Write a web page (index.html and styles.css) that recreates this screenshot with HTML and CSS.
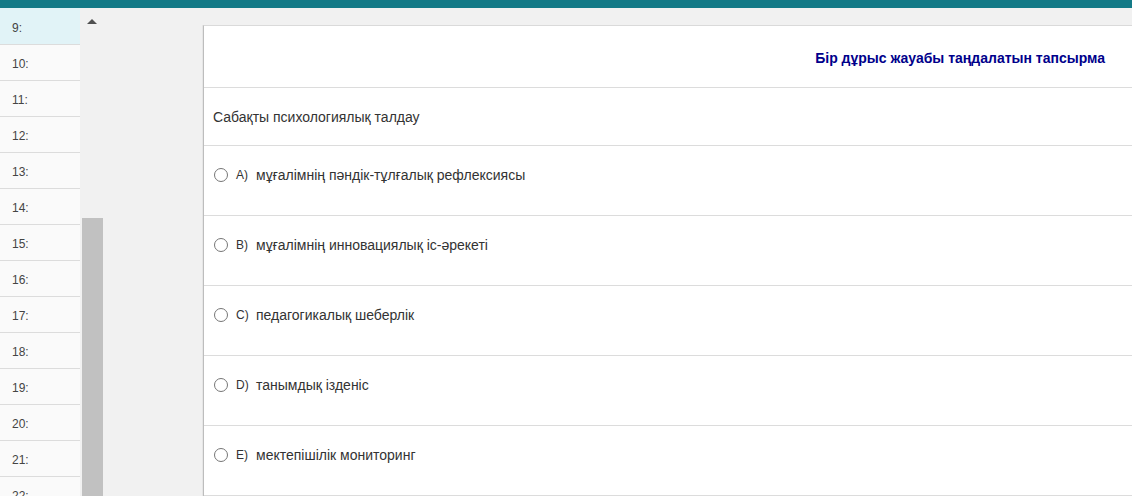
FILE: index.html
```html
<!DOCTYPE html>
<html lang="kk">
<head>
<meta charset="utf-8">
<title>Тест</title>
<link rel="stylesheet" href="styles.css">
</head>
<body>
<div class="topbar"></div>
<div class="main">
  <ul class="nums">
    <li class="active">9:</li>
    <li>10:</li>
    <li>11:</li>
    <li>12:</li>
    <li>13:</li>
    <li>14:</li>
    <li>15:</li>
    <li>16:</li>
    <li>17:</li>
    <li>18:</li>
    <li>19:</li>
    <li>20:</li>
    <li>21:</li>
    <li>22:</li>
  </ul>
  <div class="gutter">
    <div class="scroll">
      <div class="arrow"></div>
      <div class="thumb"></div>
    </div>
  </div>
  <div class="panel">
    <div class="head">Бір дұрыс жауабы таңдалатын тапсырма</div>
    <div class="question">Сабақты психологиялық талдау</div>
    <label class="opt"><span class="radio"></span><span class="letter">A)</span><span class="txt">мұғалімнің пәндік-тұлғалық рефлексиясы</span></label>
    <label class="opt"><span class="radio"></span><span class="letter">B)</span><span class="txt">мұғалімнің инновациялық іс-әрекеті</span></label>
    <label class="opt"><span class="radio"></span><span class="letter">C)</span><span class="txt">педагогикалық шеберлік</span></label>
    <label class="opt"><span class="radio"></span><span class="letter">D)</span><span class="txt">танымдық ізденіс</span></label>
    <label class="opt"><span class="radio"></span><span class="letter">E)</span><span class="txt">мектепішілік мониторинг</span></label>
  </div>
</div>
</body>
</html>
```

FILE: styles.css
```css
* { box-sizing: border-box; }
html, body { margin: 0; padding: 0; height: 100%; overflow: hidden; }
body {
  font-family: "Liberation Sans", Arial, sans-serif;
  background: #f1f1f1;
  color: #333;
}
.topbar { height: 8px; background: #137a87; }
.main { display: flex; height: 488px; overflow: hidden; }
.nums {
  list-style: none; margin: 0; padding: 1px 0 0; 
  width: 80px; flex: none; background: #fafafa;
}
.nums li {
  height: 36px; padding: 4px 0 0 12px; line-height: 30px;
  font-size: 12px; color: #444;
  border-bottom: 1px solid #dcdcdc;
}
.nums li.active { background: #e1f3f7; margin-top: -1px; height: 37px; padding-top: 5px; }
.gutter { width: 123px; flex: none; background: #f1f1f1; }
.scroll { width: 21px; margin-left: 2px; display: flex; flex-direction: column; height: 100%; }
.arrow {
  width: 0; height: 0; margin: 11px 0 0 5px;
  border-left: 5px solid transparent; border-right: 5px solid transparent;
  border-bottom: 5px solid #505050;
}
.thumb { margin-top: 194px; flex: 1; background: #c1c1c1; }
.panel {
  flex: 1; margin-top: 17px; background: #fff;
  border-left: 1px solid #bdbdbd; border-top: 1px solid #dadada;
  box-shadow: -1px 0 0 #e6e6e6;
}
.head {
  height: 62px; padding: 23px 27px 0 0; text-align: right;
  font-size: 14px; font-weight: bold; color: #00008b; line-height: 18px;
  border-bottom: 1px solid #dcdcdc;
}
.question {
  height: 58px; padding: 20px 0 0 9px; font-size: 14px; line-height: 18px; color: #333;
  border-bottom: 1px solid #dcdcdc;
}
.opt {
  display: flex; align-items: center;
  height: 70px; padding: 20px 0 31px 10px; line-height: 18px;
  border-bottom: 1px solid #dcdcdc;
}
.radio {
  width: 14px; height: 14px; border-radius: 50%;
  border: 1px solid #767676; background: #fff; flex: none;
}
.letter { font-size: 12px; margin-left: 8px; width: 20px; color: #333; }
.txt { font-size: 14px; color: #333; }
```
